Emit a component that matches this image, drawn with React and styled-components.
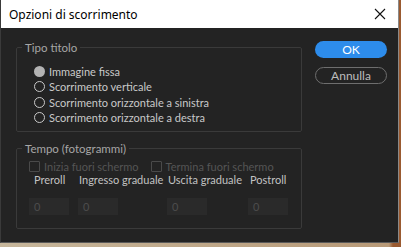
import React from "react";
import styled, { createGlobalStyle } from "styled-components";

const Global = createGlobalStyle`
  html, body { margin: 0; padding: 0; }
  body {
    width: 401px; height: 247px; overflow: hidden;
    background: #c7b79c;
  }
  * { box-sizing: border-box; }
`;

const Screen = styled.div`
  width: 401px;
  height: 247px;
  display: flex;
  flex-direction: column;
  background: linear-gradient(90deg, #c7b79c 0%, #b89a78 97%, #9a5a30 98%);
`;

const Win = styled.div`
  width: 399px;
  height: 243px;
  display: flex;
  flex-direction: column;
  border-right: 1px solid #8a8a8a;
  border-bottom: 1px solid #5a5a5a;
  border-left: 1px solid #3a3a3a;
`;

const TitleBar = styled.div`
  height: 28px;
  flex: none;
  background: #ffffff;
  display: flex;
  align-items: center;
  justify-content: space-between;
  padding: 0 8px 0 8px;
  font-family: "Segoe UI", "Noto Sans", sans-serif;
  font-size: 12px;
  color: #000;
`;

const Close = styled.svg`
  width: 12px;
  height: 12px;
  margin-right: 4px;
`;

const Body = styled.div`
  flex: 1;
  background: #232323;
  display: flex;
  padding: 13px 0 0 15px;
  gap: 13px;
  font-family: "Lato", sans-serif;
  font-size: 11px;
  white-space: nowrap;
`;

const Left = styled.div`
  width: 286px;
  display: flex;
  flex-direction: column;
  gap: 10px;
`;

const Group = styled.fieldset`
  margin: 0;
  border: 1px solid #3a3a3a;
  border-radius: 2px;
  padding: 0;
  height: ${(p) => p.$h}px;
`;

const Legend = styled.legend`
  color: #a6a6a6;
  padding: 0 3px;
  margin-left: 5px;
  font-size: 11.5px;
`;

const Content = styled.div`
  display: flex;
  flex-direction: column;
  padding: ${(p) => p.$pad};
`;

const RadioRow = styled.label`
  display: flex;
  align-items: center;
  gap: 4px;
  height: 15.3px;
  color: #c9c9c9;
`;

const RadioDot = styled.span`
  width: 11px;
  height: 11px;
  border-radius: 50%;
  border: ${(p) => (p.$on ? "none" : "1.5px solid #c9c9c9")};
  background: ${(p) => (p.$on ? "#b3b3b3" : "transparent")};
`;

const CheckRow = styled.div`
  display: flex;
  align-items: center;
  gap: 12px;
  height: 11px;
  margin-top: 3px;
`;

const Check = styled.label`
  display: flex;
  align-items: center;
  gap: 4px;
  line-height: 11px;
  color: #555555;
`;

const Box = styled.span`
  width: 11px;
  height: 11px;
  border: 1px solid #4a4a4a;
  border-radius: 1px;
`;

const Fields = styled.div`
  display: flex;
  margin-top: 2px;
`;

const Field = styled.div`
  width: ${(p) => p.$w}px;
  display: flex;
  flex-direction: column;
  gap: 13px;
`;

const FieldLabel = styled.div`
  color: #c2c2c2;
  font-size: 11px;
  line-height: 11px;
  padding-left: ${(p) => p.$indent}px;
`;

const Input = styled.div`
  width: 40px;
  height: 17px;
  background: #2a2a2a;
  color: #4d4d4d;
  padding-left: 5px;
  line-height: 17px;
  font-size: 11px;
`;

const Buttons = styled.div`
  width: 72px;
  display: flex;
  flex-direction: column;
  gap: 9px;
`;

const Button = styled.div`
  height: 17px;
  border-radius: 9px;
  display: flex;
  align-items: center;
  justify-content: center;
  font-size: 12px;
  background: ${(p) => (p.$primary ? "#2d8ceb" : "transparent")};
  border: ${(p) => (p.$primary ? "none" : "1px solid #6e6e6e")};
  color: ${(p) => (p.$primary ? "#fff" : "#bdbdbd")};
`;

export default function App() {
  const radios = [
    ["Immagine fissa", true],
    ["Scorrimento verticale", false],
    ["Scorrimento orizzontale a sinistra", false],
    ["Scorrimento orizzontale a destra", false],
  ];
  const fields = [
    ["Preroll", 49, 5],
    ["Ingresso graduale", 89, 1],
    ["Uscita graduale", 81, 1],
    ["Postroll", 50, 2],
  ];
  return (
    <Screen>
      <Global />
      <Win>
        <TitleBar>
          <span>Opzioni di scorrimento</span>
          <Close viewBox="0 0 12 12">
            <path d="M1 1 L11 11 M11 1 L1 11" stroke="#111" strokeWidth="1.1" fill="none" />
          </Close>
        </TitleBar>
        <Body>
          <Left>
            <Group $h={91}>
              <Legend>Tipo titolo</Legend>
              <Content $pad="10px 0 0 17px">
                {radios.map(([t, on]) => (
                  <RadioRow key={t}>
                    <RadioDot $on={on} />
                    {t}
                  </RadioRow>
                ))}
              </Content>
            </Group>
            <Group $h={87}>
              <Legend>Tempo (fotogrammi)</Legend>
              <Content $pad="3px 0 0 12px">
                <CheckRow>
                  <Check>
                    <Box />
                    Inizia fuori schermo
                  </Check>
                  <Check>
                    <Box />
                    Termina fuori schermo
                  </Check>
                </CheckRow>
                <Fields>
                  {fields.map(([l, w, i]) => (
                    <Field key={l} $w={w}>
                      <FieldLabel $indent={i}>{l}</FieldLabel>
                      <Input>0</Input>
                    </Field>
                  ))}
                </Fields>
              </Content>
            </Group>
          </Left>
          <Buttons>
            <Button $primary>OK</Button>
            <Button>Annulla</Button>
          </Buttons>
        </Body>
      </Win>
    </Screen>
  );
}
